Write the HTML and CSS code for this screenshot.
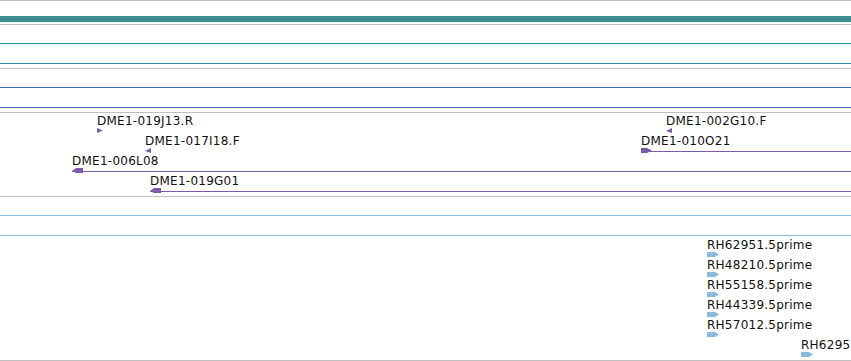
FILE: index.html
```html
<!DOCTYPE html>
<html>
<head>
    <link rel="stylesheet" href="styles.css">
</head>
<body>
    <div id="browser">
        <div class="track">
            <div class="lane contigLane"><div class="contig"></div></div>
        </div>

        <div class="track">
            <div class="lane"><div class="span teal"></div></div>
            <div class="lane"><div class="span teal"></div></div>
        </div>

        <div class="track">
            <div class="lane"><div class="span blue"></div></div>
            <div class="lane"><div class="span blue"></div></div>
        </div>

        <div class="track purple">
            <div class="row">
                <div class="feat" style="left: 97px">
                    <span class="label">DME1-019J13.R</span>
                    <svg class="glyph" width="6" height="6" viewBox="0 0 6 6"><polygon points="0,0 6,2.5 0,5"/></svg>
                </div>
                <div class="feat" style="left: 666px">
                    <span class="label">DME1-002G10.F</span>
                    <svg class="glyph" width="6" height="6" viewBox="0 0 6 6"><polygon points="6,0 0,3 6,5"/></svg>
                </div>
            </div>
            <div class="row">
                <div class="feat" style="left: 145px">
                    <span class="label">DME1-017I18.F</span>
                    <svg class="glyph" width="6" height="6" viewBox="0 0 6 6"><polygon points="6,0 0,3 6,5"/></svg>
                </div>
                <div class="feat long" style="left: 641px">
                    <span class="label">DME1-010O21</span>
                    <div class="extent">
                        <svg class="arrow" width="12" height="6" viewBox="0 0 12 6"><polygon points="0,0 6,0 11,2.5 6,5 0,5"/></svg>
                    </div>
                </div>
            </div>
            <div class="row">
                <div class="feat long" style="left: 72px">
                    <span class="label">DME1-006L08</span>
                    <div class="extent">
                        <svg class="arrow" width="12" height="6" viewBox="0 0 12 6"><polygon points="0,3 4,0 11,0 11,5 4,5"/></svg>
                    </div>
                </div>
            </div>
            <div class="row">
                <div class="feat long" style="left: 150px">
                    <span class="label">DME1-019G01</span>
                    <div class="extent">
                        <svg class="arrow" width="12" height="6" viewBox="0 0 12 6"><polygon points="0,3 4,0 11,0 11,5 4,5"/></svg>
                    </div>
                </div>
            </div>
        </div>

        <div class="track est">
            <div class="lane"><div class="span lightblue"></div></div>
            <div class="lane"><div class="span lightblue"></div></div>
            <div class="row">
                <div class="feat" style="left: 707px">
                    <span class="label">RH62951.5prime</span>
                    <svg class="glyph" width="12" height="6" viewBox="0 0 12 6"><polygon points="0,0 8,0 12,2.5 8,5 0,5"/></svg>
                </div>
            </div>
            <div class="row">
                <div class="feat" style="left: 707px">
                    <span class="label">RH48210.5prime</span>
                    <svg class="glyph" width="12" height="6" viewBox="0 0 12 6"><polygon points="0,0 8,0 12,2.5 8,5 0,5"/></svg>
                </div>
            </div>
            <div class="row">
                <div class="feat" style="left: 707px">
                    <span class="label">RH55158.5prime</span>
                    <svg class="glyph" width="12" height="6" viewBox="0 0 12 6"><polygon points="0,0 8,0 12,2.5 8,5 0,5"/></svg>
                </div>
            </div>
            <div class="row">
                <div class="feat" style="left: 707px">
                    <span class="label">RH44339.5prime</span>
                    <svg class="glyph" width="12" height="6" viewBox="0 0 12 6"><polygon points="0,0 8,0 12,2.5 8,5 0,5"/></svg>
                </div>
            </div>
            <div class="row">
                <div class="feat" style="left: 707px">
                    <span class="label">RH57012.5prime</span>
                    <svg class="glyph" width="12" height="6" viewBox="0 0 12 6"><polygon points="0,0 8,0 12,2.5 8,5 0,5"/></svg>
                </div>
            </div>
            <div class="row">
                <div class="feat" style="left: 801px">
                    <span class="label">RH62951.5prime</span>
                    <svg class="glyph" width="12" height="6" viewBox="0 0 12 6"><polygon points="0,0 8,0 12,2.5 8,5 0,5"/></svg>
                </div>
            </div>
        </div>
    </div>
</body>
</html>
```

FILE: styles.css
```css
body, html {
    margin: 0;
    background-color: #fff;
    overflow: hidden;
}
#browser {
    width: 851px;
    border-top: 1px solid #c0c0c0;
    overflow: hidden;
    font-family: "DejaVu Sans", sans-serif;
    font-size: 12px;
    letter-spacing: 0.25px;
    color: #111;
}
.track {
    padding-bottom: 3px;
    border-bottom: 1px solid #c0c0c0;
}
.lane {
    height: 20px;
    padding-top: 18px;
    box-sizing: border-box;
}
.contigLane {
    padding-top: 15px;
}
.contig {
    height: 6px;
    background-color: #3f8f8f;
}
.span {
    height: 1px;
}
.teal { background-color: #2a8fa6; }
.blue { background-color: #3b6cbf; }
.lightblue { background-color: #88bbdd; }

.row {
    position: relative;
    height: 20px;
}
.feat {
    position: absolute;
    top: 0;
    height: 20px;
}
.feat.long {
    right: 0;
}
.label {
    display: block;
    height: 15px;
    padding-top: 1px;
    box-sizing: border-box;
    line-height: 15px;
    white-space: nowrap;
}
.glyph {
    display: block;
}
.extent {
    position: relative;
    height: 5px;
}
.extent::before {
    content: "";
    position: absolute;
    left: 0;
    right: 0;
    top: 3px;
    height: 1px;
    background-color: #7a5ba8;
}
.arrow {
    position: absolute;
    left: 0;
    top: 0;
}
.purple svg { fill: #7a5ba8; }
.est svg { fill: #88bbdd; }
```
